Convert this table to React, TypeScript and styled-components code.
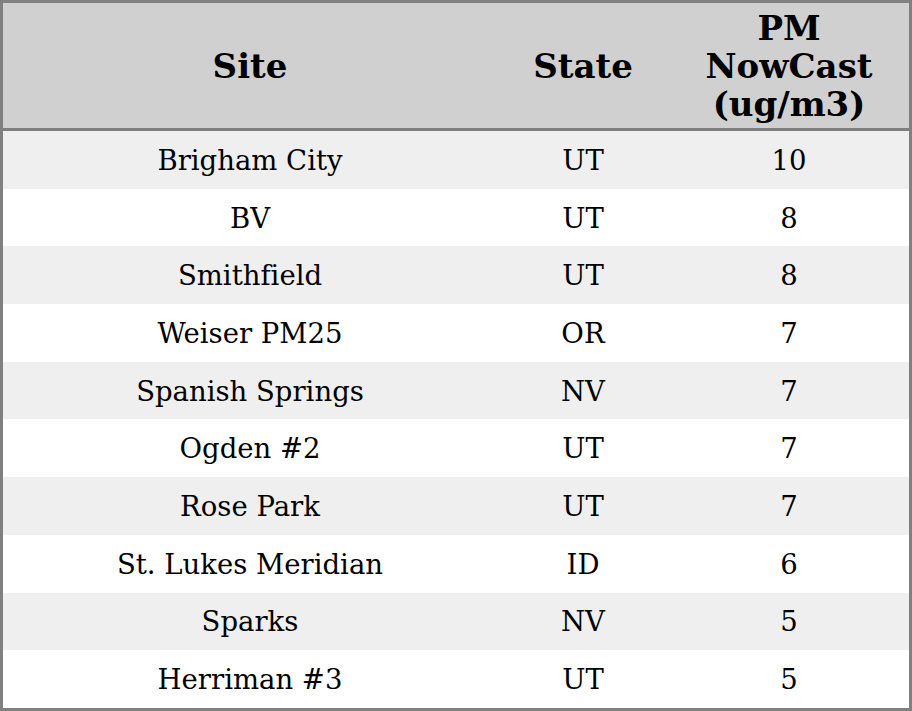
import styled, { createGlobalStyle } from 'styled-components'

const GlobalStyle = createGlobalStyle`
    html, body {
        margin: 0;
        padding: 0;
        height: 100%;
        background: #ffffff;
    }
    #root {
        height: 100%;
    }
`

const BORDER = '#808080'

interface Reading {
    site: string
    state: string
    pm: number
}

const readings: Reading[] = [
    { site: 'Brigham City', state: 'UT', pm: 10 },
    { site: 'BV', state: 'UT', pm: 8 },
    { site: 'Smithfield', state: 'UT', pm: 8 },
    { site: 'Weiser PM25', state: 'OR', pm: 7 },
    { site: 'Spanish Springs', state: 'NV', pm: 7 },
    { site: 'Ogden #2', state: 'UT', pm: 7 },
    { site: 'Rose Park', state: 'UT', pm: 7 },
    { site: 'St. Lukes Meridian', state: 'ID', pm: 6 },
    { site: 'Sparks', state: 'NV', pm: 5 },
    { site: 'Herriman #3', state: 'UT', pm: 5 },
]

const Table = styled.table`
    width: 100%;
    height: 100%;
    box-sizing: border-box;
    border: 3px solid ${BORDER};
    border-collapse: separate;
    border-spacing: 0;
    table-layout: fixed;
    font-family: "DejaVu Serif", serif;
    font-variant-ligatures: none;
    color: #000;
`

const HeadCell = styled.th<{ $width: number }>`
    box-sizing: border-box;
    width: ${p => p.$width}px;
    height: 128px;
    padding: 0 16px;
    background: #d0d0d0;
    border-bottom: 3px solid ${BORDER};
    font-size: 34px;
    font-weight: bold;
    line-height: 38px;
    text-align: center;
    vertical-align: middle;
`

const Row = styled.tr<{ $striped: boolean }>`
    background: ${p => (p.$striped ? '#efefef' : '#ffffff')};
`

const Cell = styled.td`
    box-sizing: border-box;
    padding: 0 16px;
    font-size: 27.5px;
    line-height: 32px;
    text-align: center;
    vertical-align: middle;
`

const App = () => {
    return (
        <>
            <GlobalStyle />
            <Table>
                <thead>
                    <tr>
                        <HeadCell $width={494}>Site</HeadCell>
                        <HeadCell $width={172}>State</HeadCell>
                        <HeadCell $width={240}>PM NowCast (ug/m3)</HeadCell>
                    </tr>
                </thead>
                <tbody>
                    {readings.map((r, index) => (
                        <Row key={r.site} $striped={index % 2 === 0}>
                            <Cell>{r.site}</Cell>
                            <Cell>{r.state}</Cell>
                            <Cell>{r.pm}</Cell>
                        </Row>
                    ))}
                </tbody>
            </Table>
        </>
    )
}

export default App
